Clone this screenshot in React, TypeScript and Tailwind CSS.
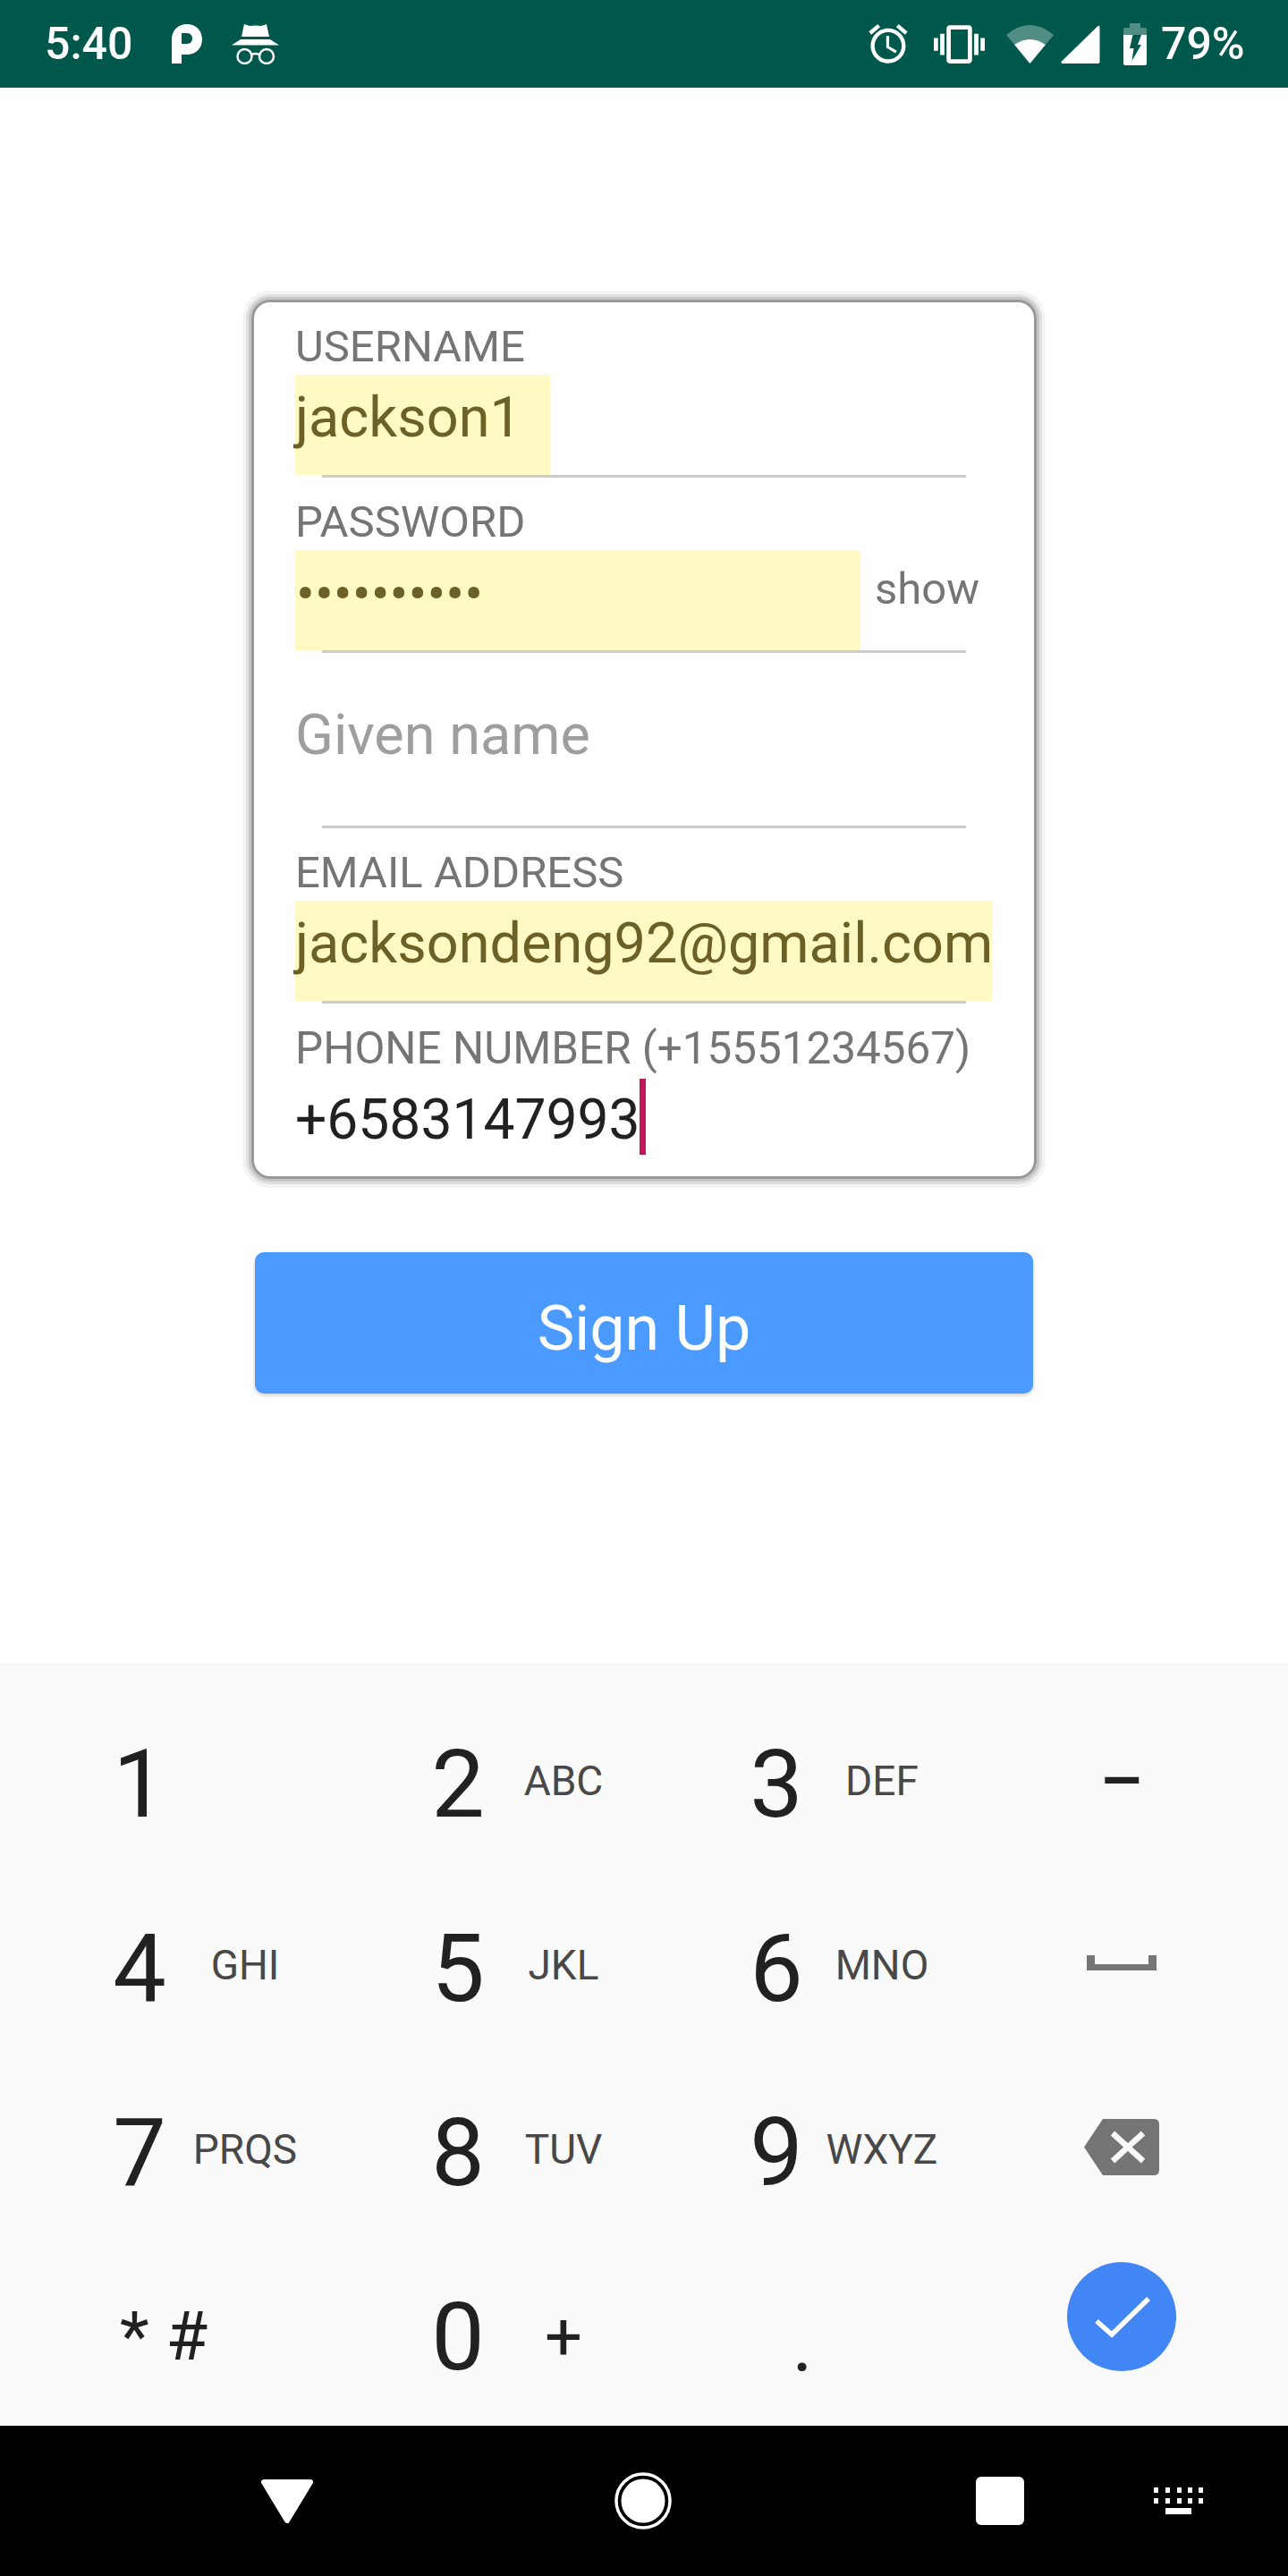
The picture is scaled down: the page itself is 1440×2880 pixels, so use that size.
import { MdAccessAlarm, MdVibration } from 'react-icons/md';

const rows = [
  [
    { digit: '1', label: '' },
    { digit: '2', label: 'ABC' },
    { digit: '3', label: 'DEF' },
  ],
  [
    { digit: '4', label: 'GHI' },
    { digit: '5', label: 'JKL' },
    { digit: '6', label: 'MNO' },
  ],
  [
    { digit: '7', label: 'PRQS' },
    { digit: '8', label: 'TUV' },
    { digit: '9', label: 'WXYZ' },
  ],
];

function Key({ digit, label }: { digit: string; label: string }) {
  return (
    <div className="flex w-[356px] items-center">
      <span className="ml-[96px] w-[120px] pt-[7px] text-center text-[106px] leading-none text-[#212121]">{digit}</span>
      <div className="flex w-[116px] justify-center text-[46px] leading-none text-[#484848]">
        <span className="shrink-0">{label}</span>
      </div>
    </div>
  );
}

function Field({ label, value, width }: { label: string; value: string; width: string }) {
  return (
    <div>
      <div className="h-[81px] pl-[46px] pt-[22px] text-[49px] leading-[56px] text-[#757575]">{label}</div>
      <div className={`ml-[46px] h-[112px] ${width} bg-[#fff9c4] text-[63px] leading-[96px] text-[#6b6026]`}>{value}</div>
      <div className="ml-[76px] h-[3px] w-[720px] bg-[#cccccc]" />
    </div>
  );
}

function StatusBar() {
  return (
    <div className="flex h-[98px] shrink-0 items-center bg-[#00574b] text-white">
      <span className="ml-[50px] w-[99px] text-[50px] leading-none font-medium">5:40</span>
      <svg className="ml-[43px]" width="34" height="44" viewBox="0 0 34 44">
        <path
          fill="#fff"
          fillRule="evenodd"
          d="M0 44V17C0 7 7 0 17 0s17 7 17 17-7 17-17 17h-6v10H0zM11 10v12h6c4 0 6-3 6-6s-2-6-6-6h-6z"
        />
      </svg>
      <svg className="ml-[33px]" width="53" height="46" viewBox="0 0 53 46">
        <path fill="#fff" d="M14 1l6 2 6.500-0.500 6.500 0.500 6-2 3 14H11zM10 18h33l10 6.500H0z" />
        <circle cx="14.500" cy="37" r="8" fill="none" stroke="#fff" strokeWidth="2.500" />
        <circle cx="39" cy="37" r="8" fill="none" stroke="#fff" strokeWidth="2.500" />
        <path fill="none" stroke="#fff" strokeWidth="2.500" d="M22 35q4.500-2 9 0" />
      </svg>
      <MdAccessAlarm className="ml-[655px]" size={52} />
      <MdVibration className="ml-[25px]" size={57} />
      <svg className="ml-[24px]" width="53" height="43" viewBox="0 0 53 43">
        <path fill="#fff" fillOpacity="0.32" d="M26.500 43L0 11Q26.500-11 53 11z" />
        <path fill="#fff" d="M26.500 43L9.200 22Q26.500 10 43.800 22z" />
      </svg>
      <svg className="ml-[8px]" width="44" height="43" viewBox="0 0 44 43">
        <path fill="#fff" d="M41 1.500Q43.500-.5 43.500 3V41Q43.500 43 41.500 43H2Q-.5 43 1 40.500z" />
      </svg>
      <svg className="ml-[26px]" width="26" height="47" viewBox="0 0 26 47">
        <path fill="#fff" fillOpacity="0.32" d="M7 0h12v5h5q2 0 2 2v6H0V7q0-2 2-2h5z" />
        <path fill="#fff" d="M0 13h26v32q0 2-2 2H2q-2 0-2-2z" />
        <path fill="#00574b" d="M10.500 13H20l-4 11h4L9.500 42l2-14H7z" />
      </svg>
      <span className="ml-[16px] text-[50px] leading-none font-medium">79%</span>
    </div>
  );
}

function NavBar() {
  return (
    <div className="flex h-[168px] shrink-0 items-center bg-black pl-[292px]">
      <svg width="58" height="49" viewBox="0 0 58 49">
        <path fill="#fff" stroke="#fff" strokeWidth="6" strokeLinejoin="round" d="M3 3h52L29 46z" />
      </svg>
      <svg className="ml-[337px]" width="64" height="64" viewBox="0 0 64 64">
        <circle cx="32" cy="32" r="30" fill="none" stroke="#fff" strokeWidth="3.500" />
        <circle cx="32" cy="32" r="24.500" fill="#fff" />
      </svg>
      <div className="ml-[340px] h-[54px] w-[54px] rounded-[6px] bg-white" />
      <svg className="ml-[145px]" width="55" height="30" viewBox="0 0 55 30">
        <path
          fill="#fff"
          d="M0 0h5v6H0zM13 0h5v6h-5zM26 0h5v6h-5zM38 0h5v6h-5zM50 0h5v6h-5zM0 12h5v6H0zM13 12h5v6h-5zM26 12h5v6h-5zM38 12h5v6h-5zM50 12h5v6h-5zM13 23h29v7H13z"
        />
      </svg>
    </div>
  );
}

export default function App() {
  return (
    <div className="flex h-[2880px] w-[1440px] flex-col overflow-hidden bg-white font-['Roboto',sans-serif]">
      <StatusBar />

      <main className="flex-1">
        <div className="ml-[284px] mt-[240px] h-[977px] w-[872px] rounded-[18px] bg-white shadow-[0_0_0_3px_#999999,0_0_0_6px_#c6c6c6,0_0_0_9px_#e0e0e0,0_0_0_13px_#f4f4f4]">
          <Field label="USERNAME" value="jackson1" width="w-[285px]" />

          <div>
            <div className="h-[81px] pl-[46px] pt-[22px] text-[49px] leading-[56px] text-[#757575]">PASSWORD</div>
            <div className="flex h-[112px]">
              <div className="ml-[46px] w-[632px] bg-[#fff9c4] pl-[1px] text-[62px] leading-[98px] text-[#6b6026]">
                ••••••••••
              </div>
              <span className="ml-[16px] text-[49px] leading-[88px] text-[#757575]">show</span>
            </div>
            <div className="ml-[76px] h-[3px] w-[720px] bg-[#cccccc]" />
          </div>

          <div>
            <div className="h-[193px] pl-[46px] pt-[43px] text-[63px] leading-[98px] text-[#9e9e9e]">Given name</div>
            <div className="ml-[76px] h-[3px] w-[720px] bg-[#cccccc]" />
          </div>

          <Field label="EMAIL ADDRESS" value="jacksondeng92@gmail.com" width="w-[779px]" />

          <div className="h-[81px] pl-[46px] pt-[22px] text-[49.4px] leading-[56px] text-[#757575]">
            PHONE NUMBER (+15551234567)
          </div>
          <div className="flex h-[98px] pl-[46px] text-[62.3px] leading-[98px] text-[#212121]">
            +6583147993
            <div className="mt-[3px] h-[85px] w-[7px] bg-[#c2185b]" />
          </div>
        </div>

        <button className="ml-[285px] mt-[85px] flex h-[158px] w-[870px] items-center justify-center rounded-[10px] bg-[#4a9aff] pt-[12px] text-[70px] text-white shadow-[0_2px_4px_rgba(0,0,0,0.2)]">
          Sign Up
        </button>
      </main>

      <div className="h-[852px] shrink-0 border-t-2 border-[#f5f5f5] bg-[#fafafa] pt-[26px]">
        {rows.map((row, i) => (
          <div key={row[0].digit} className="flex h-[206px]">
            {row.map((k) => (
              <Key key={k.digit} digit={k.digit} label={k.label} />
            ))}
            <div className="flex w-[372px] items-center justify-center">
              {i === 0 && <span className="text-[76px] leading-none font-medium text-[#212121]">–</span>}
              {i === 1 && (
                <svg className="mb-[5px]" width="78" height="17" viewBox="0 0 78 17">
                  <path fill="#757575" d="M0 0h9v10h60V0h9v17H0z" />
                </svg>
              )}
              {i === 2 && (
                <svg className="mb-[5px]" width="84" height="63" viewBox="0 0 84 63">
                  <path fill="#757575" d="M0 31.500L21 0H78q6 0 6 6v51q0 6-6 6H21z" />
                  <path fill="none" stroke="#fafafa" strokeWidth="6.500" d="M32 16l34 31M66 16L32 47" />
                </svg>
              )}
            </div>
          </div>
        ))}
        <div className="flex h-[206px]">
          <div className="flex w-[356px] items-center">
            <span className="ml-[134px] pt-[6px] text-[76px] leading-none text-[#212121]">* #</span>
          </div>
          <div className="flex w-[356px] items-center">
            <span className="ml-[96px] w-[120px] pt-[7px] text-center text-[106px] leading-none text-[#212121]">0</span>
            <span className="w-[116px] pt-[8px] text-center text-[74px] leading-none text-[#212121]">+</span>
          </div>
          <div className="flex w-[356px] items-center justify-center pl-[14px] pt-[22px] text-[88px] leading-none text-[#212121]">.</div>
          <div className="flex w-[372px] justify-center pt-[23px]">
            <div className="h-[122px] w-[122px] rounded-full bg-[#4285f4]">
              <svg width="122" height="122" viewBox="0 0 122 122">
                <path fill="none" stroke="#fff" strokeWidth="5.500" d="M33 66l17 15 41-40" />
              </svg>
            </div>
          </div>
        </div>
      </div>

      <NavBar />
    </div>
  );
}
